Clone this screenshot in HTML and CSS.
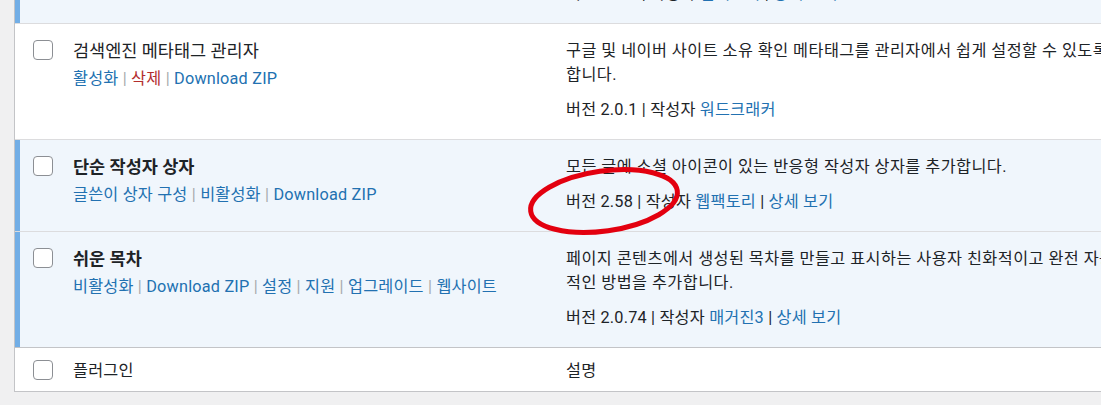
FILE: index.html
```html
<!DOCTYPE html>
<html lang="ko">
<head>
  <meta charset="UTF-8" />
  <meta name="viewport" content="width=device-width, initial-scale=1.0" />
  <title>플러그인 | 관리자</title>
  <link rel="stylesheet" href="styles.css">
</head>
<body>
  <div class="screen">
    <div class="plugins">
      <div class="plugin active">
        <div class="check-column"><input type="checkbox" /></div>
        <div class="plugin-title">
          <strong>간편 사이트맵</strong>
          <div class="row-actions"><a href="#">설정</a> | <a href="#">비활성화</a> | <a href="#">Download ZIP</a></div>
        </div>
        <div class="plugin-desc">
          <p>검색엔진을 위한 사이트맵을 자동으로 생성합니다.</p>
          <div class="version">버전 1.4.2 | 작성자 <a href="#">웹팩토리</a> | <a href="#">상세 보기</a></div>
        </div>
      </div>

      <div class="plugin inactive">
        <div class="check-column"><input type="checkbox" /></div>
        <div class="plugin-title">
          <strong>검색엔진 메타태그 관리자</strong>
          <div class="row-actions"><a href="#">활성화</a> | <a href="#" class="delete">삭제</a> | <a href="#">Download ZIP</a></div>
        </div>
        <div class="plugin-desc">
          <p>구글 및 네이버 사이트 소유 확인 메타태그를 관리자에서 쉽게 설정할 수 있도록<br>합니다.</p>
          <div class="version">버전 2.0.1 | 작성자 <a href="#">워드크래커</a></div>
        </div>
      </div>

      <div class="plugin active">
        <div class="check-column"><input type="checkbox" /></div>
        <div class="plugin-title">
          <strong>단순 작성자 상자</strong>
          <div class="row-actions"><a href="#">글쓴이 상자 구성</a> | <a href="#">비활성화</a> | <a href="#">Download ZIP</a></div>
        </div>
        <div class="plugin-desc">
          <p>모든 글에 소셜 아이콘이 있는 반응형 작성자 상자를 추가합니다.</p>
          <div class="version">버전 2.58 | 작성자 <a href="#">웹팩토리</a> | <a href="#">상세 보기</a></div>
        </div>
      </div>

      <div class="plugin active last">
        <div class="check-column"><input type="checkbox" /></div>
        <div class="plugin-title">
          <strong>쉬운 목차</strong>
          <div class="row-actions"><a href="#">비활성화</a> | <a href="#">Download ZIP</a> | <a href="#">설정</a> | <a href="#">지원</a> | <a href="#">업그레이드</a> | <a href="#">웹사이트</a></div>
        </div>
        <div class="plugin-desc">
          <p>페이지 콘텐츠에서 생성된 목차를 만들고 표시하는 사용자 친화적이고 완전 자동<br>적인 방법을 추가합니다.</p>
          <div class="version">버전 2.0.74 | 작성자 <a href="#">매거진3</a> | <a href="#">상세 보기</a></div>
        </div>
      </div>

      <div class="plugin-foot">
        <div class="check-column"><input type="checkbox" /></div>
        <div class="foot-cell">플러그인</div>
        <div class="foot-cell">설명</div>
      </div>
    </div>

    <svg class="annotation" width="1101" height="405" viewBox="0 0 1101 405">
      <ellipse cx="604" cy="201" rx="74" ry="30" transform="rotate(-8 604 201)" />
    </svg>
  </div>
</body>
</html>
```

FILE: styles.css
```css
body {
  margin: 0;
  background-color: #f0f0f1;
  font-family: Roboto, "Noto Sans CJK KR", sans-serif;
  font-size: 16.25px;
  line-height: 24px;
  letter-spacing: 0.2px;
  color: #1d2327;
}
.screen {
  position: relative;
  width: 1101px;
  height: 405px;
  overflow: hidden;
}
.plugins {
  margin: -68px 0 0 14px;
  width: 1400px;
  background-color: #fff;
  border: 1px solid #c3c4c7;
  border-top: none;
}
.plugin,
.plugin-foot {
  display: grid;
  grid-template-columns: 58px 493px 1fr;
}
.plugin {
  border-bottom: 1px solid #dcdcde;
}
.plugin.last {
  border-bottom: none;
}
.plugin.active {
  background-color: #f0f6fc;
}
.check-column {
  box-sizing: border-box;
  padding: 16px 0 0 18px;
}
.plugin.active .check-column {
  border-left: 5px solid #72aee6;
  padding-left: 13px;
}
.check-column input {
  appearance: none;
  -webkit-appearance: none;
  display: block;
  margin: 0;
  width: 20px;
  height: 20px;
  box-sizing: border-box;
  border: 1px solid #8c8f94;
  border-radius: 4px;
  background: #fff;
}
.plugin-title,
.plugin-desc {
  padding: 15px 0 17px;
}
.plugin-title strong {
  display: block;
  font-size: 17.5px;
  font-weight: 700;
  letter-spacing: 0;
}
.plugin.inactive .plugin-title strong {
  font-weight: 400;
}
.row-actions {
  margin-top: 4px;
  color: #a7aaad;
  white-space: nowrap;
}
a {
  color: #2271b1;
  text-decoration: none;
}
a.delete {
  color: #b32d2e;
}
.plugin-desc p {
  margin: 0 0 11px;
  letter-spacing: 0.45px;
  white-space: nowrap;
}
.version {
  white-space: nowrap;
}
.plugin-foot {
  border-top: 1px solid #c3c4c7;
}
.plugin-foot .check-column {
  padding-top: 12px;
}
.foot-cell {
  padding: 11px 0 8px;
}
.annotation {
  position: absolute;
  left: 0;
  top: 0;
  pointer-events: none;
}
.annotation ellipse {
  fill: none;
  stroke: #e3000f;
  stroke-width: 5;
}
```
